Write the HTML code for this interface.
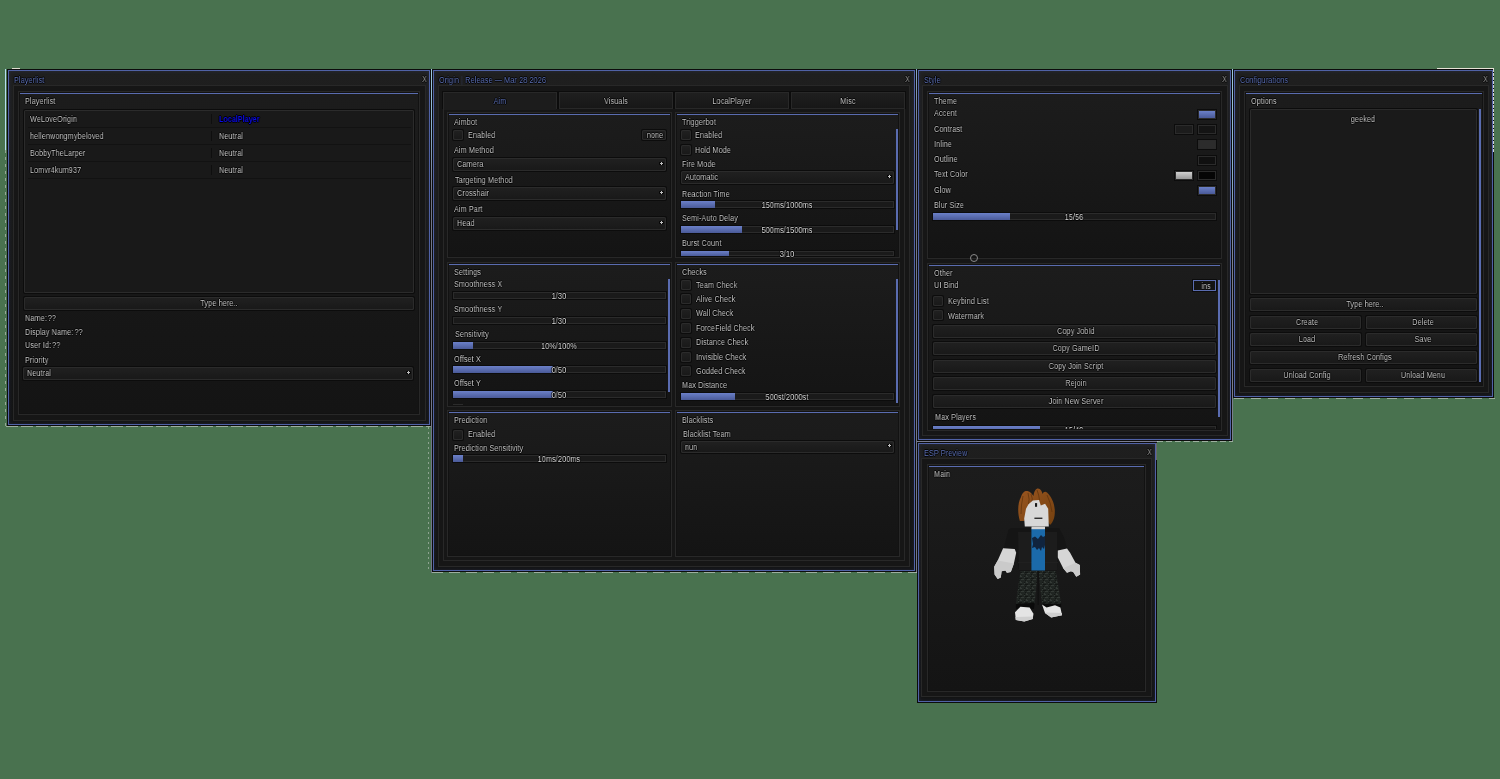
<!DOCTYPE html>
<html><head><meta charset="utf-8"><style>
html,body{margin:0;padding:0}
body{width:1500px;height:779px;background:#49724f;position:relative;overflow:hidden;font-family:"Liberation Sans",sans-serif}
.b{position:absolute}
.t{position:absolute;font-size:8.4px;line-height:10px;white-space:nowrap;letter-spacing:0.15px;transform:scaleX(0.86);transform-origin:0 0;will-change:transform;text-shadow:1px 0 0 #000,-1px 0 0 #000,0 1px 0 #000,0 -1px 0 #000}
</style></head><body>
<div class="b" style="left:7px;top:69px;width:424px;height:357px;background:#0c0c0c;"></div><div class="b" style="left:8px;top:70px;width:422px;height:355px;background:#5062a6;"></div><div class="b" style="left:9px;top:71px;width:420px;height:353px;background:#171717;background:linear-gradient(#1f1f1f,#1a1a1a 40%,#141414);box-shadow:inset 0 0 4px 0 rgba(70,85,150,0.22)"></div><div class="t" style="left:14px;top:74.5px;color:#5e72b8;">Playerlist</div><div class="t" style="left:422px;top:74.0px;color:#9a9a9a;">X</div><div class="b" style="left:13px;top:85px;width:413px;height:336px;background:#282828;"></div><div class="b" style="left:14px;top:86px;width:411px;height:334px;background:#161616;"></div><div class="b" style="left:18px;top:91px;width:402px;height:324px;background:#282828;"></div><div class="b" style="left:19px;top:92px;width:400px;height:322px;background:#121212;"></div><div class="b" style="left:20px;top:93px;width:398px;height:320px;background:#1b1b1b;background:linear-gradient(#1c1c1c,#1b1b1b 15%,#141414)"></div><div class="b" style="left:20px;top:93px;width:398px;height:1px;background:#5a6cb0;"></div><div class="t" style="left:25px;top:95.5px;color:#c8c8c8;">Playerlist</div><div class="b" style="left:23px;top:109px;width:392px;height:185px;background:#0c0c0c;border-radius:2px"></div><div class="b" style="left:24px;top:110px;width:390px;height:183px;background:#2b2b2b;border-radius:1.5px"></div><div class="b" style="left:25px;top:111px;width:388px;height:181px;background:#191919;"></div><div class="t" style="left:30px;top:113.8px;color:#c8c8c8;">WeLoveOrigin</div><div class="b" style="left:211px;top:114px;width:1px;height:10px;background:#0e0e0e;"></div><div class="t" style="left:219px;top:113.8px;color:#0c0ce6;font-weight:bold;letter-spacing:0px">LocalPlayer</div><div class="b" style="left:28px;top:127px;width:383px;height:1px;background:#121212;"></div><div class="t" style="left:30px;top:130.8px;color:#c8c8c8;">hellenwongmybeloved</div><div class="b" style="left:211px;top:131px;width:1px;height:10px;background:#0e0e0e;"></div><div class="t" style="left:219px;top:130.8px;color:#c8c8c8;">Neutral</div><div class="b" style="left:28px;top:144px;width:383px;height:1px;background:#121212;"></div><div class="t" style="left:30px;top:147.8px;color:#c8c8c8;">BobbyTheLarper</div><div class="b" style="left:211px;top:148px;width:1px;height:10px;background:#0e0e0e;"></div><div class="t" style="left:219px;top:147.8px;color:#c8c8c8;">Neutral</div><div class="b" style="left:28px;top:161px;width:383px;height:1px;background:#121212;"></div><div class="t" style="left:30px;top:164.8px;color:#c8c8c8;">Lomvr4kum937</div><div class="b" style="left:211px;top:165px;width:1px;height:10px;background:#0e0e0e;"></div><div class="t" style="left:219px;top:164.8px;color:#c8c8c8;">Neutral</div><div class="b" style="left:28px;top:178px;width:383px;height:1px;background:#121212;"></div><div class="b" style="left:23px;top:296px;width:392px;height:15px;background:#0c0c0c;border-radius:2px"></div><div class="b" style="left:24px;top:297px;width:390px;height:13px;background:#2b2b2b;border-radius:1.5px"></div><div class="b" style="left:25px;top:298px;width:388px;height:11px;background:linear-gradient(#202020,#191919);border-radius:1px"></div><div class="t" style="left:69px;width:300px;text-align:center;top:298.0px;color:#c8c8c8;transform-origin:50% 0;">Type here..</div><div class="t" style="left:25px;top:313.0px;color:#c8c8c8;">Name:<span style="margin-left:1px">??</span></div><div class="t" style="left:25px;top:326.5px;color:#c8c8c8;">Display Name:<span style="margin-left:1px">??</span></div><div class="t" style="left:25px;top:340.0px;color:#c8c8c8;">User Id:<span style="margin-left:1px">??</span></div><div class="t" style="left:25px;top:354.5px;color:#c8c8c8;">Priority</div><div class="b" style="left:22px;top:366px;width:392px;height:15px;background:#0c0c0c;border-radius:2px"></div><div class="b" style="left:23px;top:367px;width:390px;height:13px;background:#2b2b2b;border-radius:1.5px"></div><div class="b" style="left:24px;top:368px;width:388px;height:11px;background:linear-gradient(#202020,#191919);border-radius:1px"></div><div class="t" style="left:27px;top:368.0px;color:#c8c8c8;">Neutral</div><div class="b" style="left:406px;top:371px;width:5px;height:3px;background:#050505;border-radius:1px"></div><div class="b" style="left:407px;top:372px;width:3px;height:1px;background:#c0c0c0;"></div><div class="b" style="left:408px;top:371px;width:1px;height:3px;background:#c0c0c0;"></div><div class="b" style="left:432px;top:69px;width:484px;height:503px;background:#0c0c0c;"></div><div class="b" style="left:433px;top:70px;width:482px;height:501px;background:#5062a6;"></div><div class="b" style="left:434px;top:71px;width:480px;height:499px;background:#171717;background:linear-gradient(#1f1f1f,#1a1a1a 40%,#141414);box-shadow:inset 0 0 4px 0 rgba(70,85,150,0.22)"></div><div class="t" style="left:439px;top:74.5px;color:#5e72b8;">Origin <span style="color:#2e3550;text-shadow:none">|</span> Release — Mar 28 2026</div><div class="t" style="left:905px;top:74.0px;color:#9a9a9a;">X</div><div class="b" style="left:438px;top:85px;width:472px;height:482px;background:#282828;"></div><div class="b" style="left:439px;top:86px;width:470px;height:480px;background:#161616;"></div><div class="b" style="left:443px;top:108px;width:462px;height:453px;background:#282828;"></div><div class="b" style="left:444px;top:109px;width:460px;height:451px;background:#161616;"></div><div class="b" style="left:442px;top:91px;width:116px;height:18px;background:#0c0c0c;"></div><div class="b" style="left:443px;top:92px;width:114px;height:17px;background:#282828;"></div><div class="b" style="left:444px;top:93px;width:112px;height:17px;background:#1c1c1c;"></div><div class="t" style="left:349.5px;width:300px;text-align:center;top:95.5px;color:#5e72b8;transform-origin:50% 0;">Aim</div><div class="b" style="left:558px;top:91px;width:116px;height:18px;background:#0c0c0c;"></div><div class="b" style="left:559px;top:92px;width:114px;height:17px;background:#282828;"></div><div class="b" style="left:560px;top:93px;width:112px;height:15px;background:linear-gradient(#1f1f1f,#171717)"></div><div class="t" style="left:465.5px;width:300px;text-align:center;top:95.5px;color:#c8c8c8;transform-origin:50% 0;">Visuals</div><div class="b" style="left:674px;top:91px;width:116px;height:18px;background:#0c0c0c;"></div><div class="b" style="left:675px;top:92px;width:114px;height:17px;background:#282828;"></div><div class="b" style="left:676px;top:93px;width:112px;height:15px;background:linear-gradient(#1f1f1f,#171717)"></div><div class="t" style="left:581.5px;width:300px;text-align:center;top:95.5px;color:#c8c8c8;transform-origin:50% 0;">LocalPlayer</div><div class="b" style="left:790px;top:91px;width:116px;height:18px;background:#0c0c0c;"></div><div class="b" style="left:791px;top:92px;width:114px;height:17px;background:#282828;"></div><div class="b" style="left:792px;top:93px;width:112px;height:15px;background:linear-gradient(#1f1f1f,#171717)"></div><div class="t" style="left:697.5px;width:300px;text-align:center;top:95.5px;color:#c8c8c8;transform-origin:50% 0;">Misc</div><div class="b" style="left:447px;top:112px;width:225px;height:146px;background:#282828;"></div><div class="b" style="left:448px;top:113px;width:223px;height:144px;background:#121212;"></div><div class="b" style="left:449px;top:114px;width:221px;height:142px;background:#1b1b1b;background:linear-gradient(#1c1c1c,#1b1b1b 15%,#141414)"></div><div class="b" style="left:449px;top:114px;width:221px;height:1px;background:#5a6cb0;"></div><div class="t" style="left:454px;top:116.5px;color:#c8c8c8;">Aimbot</div><div class="b" style="left:452px;top:129px;width:12px;height:12px;background:#0c0c0c;border-radius:2px"></div><div class="b" style="left:453px;top:130px;width:10px;height:10px;background:#2b2b2b;border-radius:1.5px"></div><div class="b" style="left:454px;top:131px;width:8px;height:8px;background:linear-gradient(#202020,#191919);border-radius:1px"></div><div class="t" style="left:468px;top:130.0px;color:#c8c8c8;">Enabled</div><div class="b" style="left:641px;top:129px;width:26px;height:12px;background:#0c0c0c;border-radius:2px"></div><div class="b" style="left:642px;top:130px;width:24px;height:10px;background:#2b2b2b;border-radius:1.5px"></div><div class="b" style="left:643px;top:131px;width:22px;height:8px;background:linear-gradient(#202020,#191919);border-radius:1px"></div><div class="t" style="left:504.5px;width:300px;text-align:center;top:130.0px;color:#c8c8c8;transform-origin:50% 0;">none</div><div class="t" style="left:454px;top:145.0px;color:#c8c8c8;">Aim Method</div><div class="b" style="left:452px;top:157px;width:215px;height:15px;background:#0c0c0c;border-radius:2px"></div><div class="b" style="left:453px;top:158px;width:213px;height:13px;background:#2b2b2b;border-radius:1.5px"></div><div class="b" style="left:454px;top:159px;width:211px;height:11px;background:linear-gradient(#202020,#191919);border-radius:1px"></div><div class="t" style="left:457px;top:159.0px;color:#c8c8c8;">Camera</div><div class="b" style="left:659px;top:162px;width:5px;height:3px;background:#050505;border-radius:1px"></div><div class="b" style="left:660px;top:163px;width:3px;height:1px;background:#c0c0c0;"></div><div class="b" style="left:661px;top:162px;width:1px;height:3px;background:#c0c0c0;"></div><div class="t" style="left:455px;top:174.5px;color:#c8c8c8;">Targeting Method</div><div class="b" style="left:452px;top:186px;width:215px;height:15px;background:#0c0c0c;border-radius:2px"></div><div class="b" style="left:453px;top:187px;width:213px;height:13px;background:#2b2b2b;border-radius:1.5px"></div><div class="b" style="left:454px;top:188px;width:211px;height:11px;background:linear-gradient(#202020,#191919);border-radius:1px"></div><div class="t" style="left:457px;top:188.0px;color:#c8c8c8;">Crosshair</div><div class="b" style="left:659px;top:191px;width:5px;height:3px;background:#050505;border-radius:1px"></div><div class="b" style="left:660px;top:192px;width:3px;height:1px;background:#c0c0c0;"></div><div class="b" style="left:661px;top:191px;width:1px;height:3px;background:#c0c0c0;"></div><div class="t" style="left:454px;top:204.0px;color:#c8c8c8;">Aim Part</div><div class="b" style="left:452px;top:216px;width:215px;height:15px;background:#0c0c0c;border-radius:2px"></div><div class="b" style="left:453px;top:217px;width:213px;height:13px;background:#2b2b2b;border-radius:1.5px"></div><div class="b" style="left:454px;top:218px;width:211px;height:11px;background:linear-gradient(#202020,#191919);border-radius:1px"></div><div class="t" style="left:457px;top:218.0px;color:#c8c8c8;">Head</div><div class="b" style="left:659px;top:221px;width:5px;height:3px;background:#050505;border-radius:1px"></div><div class="b" style="left:660px;top:222px;width:3px;height:1px;background:#c0c0c0;"></div><div class="b" style="left:661px;top:221px;width:1px;height:3px;background:#c0c0c0;"></div><div class="b" style="left:675px;top:112px;width:225px;height:146px;background:#282828;"></div><div class="b" style="left:676px;top:113px;width:223px;height:144px;background:#121212;"></div><div class="b" style="left:677px;top:114px;width:221px;height:142px;background:#1b1b1b;background:linear-gradient(#1c1c1c,#1b1b1b 15%,#141414)"></div><div class="b" style="left:677px;top:114px;width:221px;height:1px;background:#5a6cb0;"></div><div class="t" style="left:682px;top:116.5px;color:#c8c8c8;">Triggerbot</div><div class="b" style="left:680px;top:129px;width:12px;height:12px;background:#0c0c0c;border-radius:2px"></div><div class="b" style="left:681px;top:130px;width:10px;height:10px;background:#2b2b2b;border-radius:1.5px"></div><div class="b" style="left:682px;top:131px;width:8px;height:8px;background:linear-gradient(#202020,#191919);border-radius:1px"></div><div class="t" style="left:695px;top:130.0px;color:#c8c8c8;">Enabled</div><div class="b" style="left:680px;top:144px;width:12px;height:12px;background:#0c0c0c;border-radius:2px"></div><div class="b" style="left:681px;top:145px;width:10px;height:10px;background:#2b2b2b;border-radius:1.5px"></div><div class="b" style="left:682px;top:146px;width:8px;height:8px;background:linear-gradient(#202020,#191919);border-radius:1px"></div><div class="t" style="left:695px;top:145.0px;color:#c8c8c8;">Hold Mode</div><div class="t" style="left:682px;top:159.0px;color:#c8c8c8;">Fire Mode</div><div class="b" style="left:680px;top:170px;width:215px;height:15px;background:#0c0c0c;border-radius:2px"></div><div class="b" style="left:681px;top:171px;width:213px;height:13px;background:#2b2b2b;border-radius:1.5px"></div><div class="b" style="left:682px;top:172px;width:211px;height:11px;background:linear-gradient(#202020,#191919);border-radius:1px"></div><div class="t" style="left:685px;top:172.0px;color:#c8c8c8;">Automatic</div><div class="b" style="left:887px;top:175px;width:5px;height:3px;background:#050505;border-radius:1px"></div><div class="b" style="left:888px;top:176px;width:3px;height:1px;background:#c0c0c0;"></div><div class="b" style="left:889px;top:175px;width:1px;height:3px;background:#c0c0c0;"></div><div class="t" style="left:682px;top:188.5px;color:#c8c8c8;">Reaction Time</div><div class="b" style="left:680px;top:200px;width:215px;height:9px;background:#0c0c0c;"></div><div class="b" style="left:681px;top:201px;width:213px;height:7px;background:#2b2b2b;"></div><div class="b" style="left:682px;top:202px;width:211px;height:5px;background:#1a1a1a;"></div><div class="b" style="left:681px;top:201px;width:34px;height:7px;background:linear-gradient(#6b80c8,#4a5a98)"></div><div class="t" style="left:637.0px;width:300px;text-align:center;top:199.5px;color:#c8c8c8;transform-origin:50% 0;color:#dcdcdc">150ms/1000ms</div><div class="t" style="left:682px;top:213.0px;color:#c8c8c8;">Semi-Auto Delay</div><div class="b" style="left:680px;top:225px;width:215px;height:9px;background:#0c0c0c;"></div><div class="b" style="left:681px;top:226px;width:213px;height:7px;background:#2b2b2b;"></div><div class="b" style="left:682px;top:227px;width:211px;height:5px;background:#1a1a1a;"></div><div class="b" style="left:681px;top:226px;width:61px;height:7px;background:linear-gradient(#6b80c8,#4a5a98)"></div><div class="t" style="left:637.0px;width:300px;text-align:center;top:224.5px;color:#c8c8c8;transform-origin:50% 0;color:#dcdcdc">500ms/1500ms</div><div class="t" style="left:682px;top:238.0px;color:#c8c8c8;">Burst Count</div><div class="b" style="left:680px;top:250px;width:215px;height:7px;background:#0c0c0c;"></div><div class="b" style="left:681px;top:251px;width:213px;height:5px;background:#2b2b2b;"></div><div class="b" style="left:682px;top:252px;width:211px;height:3px;background:#1a1a1a;"></div><div class="b" style="left:681px;top:251px;width:48px;height:5px;background:linear-gradient(#6b80c8,#4a5a98)"></div><div class="t" style="left:637.0px;width:300px;text-align:center;top:248.5px;color:#c8c8c8;transform-origin:50% 0;color:#dcdcdc">3/10</div><div class="b" style="left:896px;top:129px;width:2px;height:101px;background:#5a6cb0;"></div><div class="b" style="left:447px;top:262px;width:225px;height:145px;background:#282828;"></div><div class="b" style="left:448px;top:263px;width:223px;height:143px;background:#121212;"></div><div class="b" style="left:449px;top:264px;width:221px;height:141px;background:#1b1b1b;background:linear-gradient(#1c1c1c,#1b1b1b 15%,#141414)"></div><div class="b" style="left:449px;top:264px;width:221px;height:1px;background:#5a6cb0;"></div><div class="t" style="left:454px;top:266.5px;color:#c8c8c8;">Settings</div><div class="t" style="left:454px;top:279.0px;color:#c8c8c8;">Smoothness X</div><div class="b" style="left:452px;top:291px;width:215px;height:9px;background:#0c0c0c;"></div><div class="b" style="left:453px;top:292px;width:213px;height:7px;background:#2b2b2b;"></div><div class="b" style="left:454px;top:293px;width:211px;height:5px;background:#1a1a1a;"></div><div class="t" style="left:409.0px;width:300px;text-align:center;top:290.5px;color:#c8c8c8;transform-origin:50% 0;color:#dcdcdc">1/30</div><div class="t" style="left:454px;top:303.5px;color:#c8c8c8;">Smoothness Y</div><div class="b" style="left:452px;top:316px;width:215px;height:9px;background:#0c0c0c;"></div><div class="b" style="left:453px;top:317px;width:213px;height:7px;background:#2b2b2b;"></div><div class="b" style="left:454px;top:318px;width:211px;height:5px;background:#1a1a1a;"></div><div class="t" style="left:409.0px;width:300px;text-align:center;top:315.5px;color:#c8c8c8;transform-origin:50% 0;color:#dcdcdc">1/30</div><div class="t" style="left:455px;top:328.5px;color:#c8c8c8;">Sensitivity</div><div class="b" style="left:452px;top:341px;width:215px;height:9px;background:#0c0c0c;"></div><div class="b" style="left:453px;top:342px;width:213px;height:7px;background:#2b2b2b;"></div><div class="b" style="left:454px;top:343px;width:211px;height:5px;background:#1a1a1a;"></div><div class="b" style="left:453px;top:342px;width:20px;height:7px;background:linear-gradient(#6b80c8,#4a5a98)"></div><div class="t" style="left:409.0px;width:300px;text-align:center;top:340.5px;color:#c8c8c8;transform-origin:50% 0;color:#dcdcdc">10%/100%</div><div class="t" style="left:454px;top:353.5px;color:#c8c8c8;">Offset X</div><div class="b" style="left:452px;top:365px;width:215px;height:9px;background:#0c0c0c;"></div><div class="b" style="left:453px;top:366px;width:213px;height:7px;background:#2b2b2b;"></div><div class="b" style="left:454px;top:367px;width:211px;height:5px;background:#1a1a1a;"></div><div class="b" style="left:453px;top:366px;width:100px;height:7px;background:linear-gradient(#6b80c8,#4a5a98)"></div><div class="t" style="left:409.0px;width:300px;text-align:center;top:364.5px;color:#c8c8c8;transform-origin:50% 0;color:#dcdcdc">0/50</div><div class="t" style="left:454px;top:378.0px;color:#c8c8c8;">Offset Y</div><div class="b" style="left:452px;top:390px;width:215px;height:9px;background:#0c0c0c;"></div><div class="b" style="left:453px;top:391px;width:213px;height:7px;background:#2b2b2b;"></div><div class="b" style="left:454px;top:392px;width:211px;height:5px;background:#1a1a1a;"></div><div class="b" style="left:453px;top:391px;width:100px;height:7px;background:linear-gradient(#6b80c8,#4a5a98)"></div><div class="t" style="left:409.0px;width:300px;text-align:center;top:389.5px;color:#c8c8c8;transform-origin:50% 0;color:#dcdcdc">0/50</div><div class="b" style="left:453px;top:404px;width:10px;height:1px;background:#2b2b2b;"></div><div class="b" style="left:668px;top:279px;width:2px;height:113px;background:#5a6cb0;"></div><div class="b" style="left:675px;top:262px;width:225px;height:145px;background:#282828;"></div><div class="b" style="left:676px;top:263px;width:223px;height:143px;background:#121212;"></div><div class="b" style="left:677px;top:264px;width:221px;height:141px;background:#1b1b1b;background:linear-gradient(#1c1c1c,#1b1b1b 15%,#141414)"></div><div class="b" style="left:677px;top:264px;width:221px;height:1px;background:#5a6cb0;"></div><div class="t" style="left:682px;top:266.5px;color:#c8c8c8;">Checks</div><div class="b" style="left:680px;top:279px;width:12px;height:12px;background:#0c0c0c;border-radius:2px"></div><div class="b" style="left:681px;top:280px;width:10px;height:10px;background:#2b2b2b;border-radius:1.5px"></div><div class="b" style="left:682px;top:281px;width:8px;height:8px;background:linear-gradient(#202020,#191919);border-radius:1px"></div><div class="t" style="left:696px;top:279.5px;color:#c8c8c8;">Team Check</div><div class="b" style="left:680px;top:293px;width:12px;height:12px;background:#0c0c0c;border-radius:2px"></div><div class="b" style="left:681px;top:294px;width:10px;height:10px;background:#2b2b2b;border-radius:1.5px"></div><div class="b" style="left:682px;top:295px;width:8px;height:8px;background:linear-gradient(#202020,#191919);border-radius:1px"></div><div class="t" style="left:696px;top:293.9px;color:#c8c8c8;">Alive Check</div><div class="b" style="left:680px;top:308px;width:12px;height:12px;background:#0c0c0c;border-radius:2px"></div><div class="b" style="left:681px;top:309px;width:10px;height:10px;background:#2b2b2b;border-radius:1.5px"></div><div class="b" style="left:682px;top:310px;width:8px;height:8px;background:linear-gradient(#202020,#191919);border-radius:1px"></div><div class="t" style="left:696px;top:308.3px;color:#c8c8c8;">Wall Check</div><div class="b" style="left:680px;top:322px;width:12px;height:12px;background:#0c0c0c;border-radius:2px"></div><div class="b" style="left:681px;top:323px;width:10px;height:10px;background:#2b2b2b;border-radius:1.5px"></div><div class="b" style="left:682px;top:324px;width:8px;height:8px;background:linear-gradient(#202020,#191919);border-radius:1px"></div><div class="t" style="left:696px;top:322.7px;color:#c8c8c8;">ForceField Check</div><div class="b" style="left:680px;top:337px;width:12px;height:12px;background:#0c0c0c;border-radius:2px"></div><div class="b" style="left:681px;top:338px;width:10px;height:10px;background:#2b2b2b;border-radius:1.5px"></div><div class="b" style="left:682px;top:339px;width:8px;height:8px;background:linear-gradient(#202020,#191919);border-radius:1px"></div><div class="t" style="left:696px;top:337.1px;color:#c8c8c8;">Distance Check</div><div class="b" style="left:680px;top:351px;width:12px;height:12px;background:#0c0c0c;border-radius:2px"></div><div class="b" style="left:681px;top:352px;width:10px;height:10px;background:#2b2b2b;border-radius:1.5px"></div><div class="b" style="left:682px;top:353px;width:8px;height:8px;background:linear-gradient(#202020,#191919);border-radius:1px"></div><div class="t" style="left:696px;top:351.5px;color:#c8c8c8;">Invisible Check</div><div class="b" style="left:680px;top:365px;width:12px;height:12px;background:#0c0c0c;border-radius:2px"></div><div class="b" style="left:681px;top:366px;width:10px;height:10px;background:#2b2b2b;border-radius:1.5px"></div><div class="b" style="left:682px;top:367px;width:8px;height:8px;background:linear-gradient(#202020,#191919);border-radius:1px"></div><div class="t" style="left:696px;top:365.9px;color:#c8c8c8;">Godded Check</div><div class="t" style="left:682px;top:379.5px;color:#c8c8c8;">Max Distance</div><div class="b" style="left:680px;top:392px;width:215px;height:9px;background:#0c0c0c;"></div><div class="b" style="left:681px;top:393px;width:213px;height:7px;background:#2b2b2b;"></div><div class="b" style="left:682px;top:394px;width:211px;height:5px;background:#1a1a1a;"></div><div class="b" style="left:681px;top:393px;width:54px;height:7px;background:linear-gradient(#6b80c8,#4a5a98)"></div><div class="t" style="left:637.0px;width:300px;text-align:center;top:391.5px;color:#c8c8c8;transform-origin:50% 0;color:#dcdcdc">500st/2000st</div><div class="b" style="left:896px;top:279px;width:2px;height:124px;background:#5a6cb0;"></div><div class="b" style="left:447px;top:410px;width:225px;height:147px;background:#282828;"></div><div class="b" style="left:448px;top:411px;width:223px;height:145px;background:#121212;"></div><div class="b" style="left:449px;top:412px;width:221px;height:143px;background:#1b1b1b;background:linear-gradient(#1c1c1c,#1b1b1b 15%,#141414)"></div><div class="b" style="left:449px;top:412px;width:221px;height:1px;background:#5a6cb0;"></div><div class="t" style="left:454px;top:414.5px;color:#c8c8c8;">Prediction</div><div class="b" style="left:452px;top:429px;width:12px;height:12px;background:#0c0c0c;border-radius:2px"></div><div class="b" style="left:453px;top:430px;width:10px;height:10px;background:#2b2b2b;border-radius:1.5px"></div><div class="b" style="left:454px;top:431px;width:8px;height:8px;background:linear-gradient(#202020,#191919);border-radius:1px"></div><div class="t" style="left:468px;top:429.0px;color:#c8c8c8;">Enabled</div><div class="t" style="left:454px;top:442.5px;color:#c8c8c8;">Prediction Sensitivity</div><div class="b" style="left:452px;top:454px;width:215px;height:9px;background:#0c0c0c;"></div><div class="b" style="left:453px;top:455px;width:213px;height:7px;background:#2b2b2b;"></div><div class="b" style="left:454px;top:456px;width:211px;height:5px;background:#1a1a1a;"></div><div class="b" style="left:453px;top:455px;width:10px;height:7px;background:linear-gradient(#6b80c8,#4a5a98)"></div><div class="t" style="left:409.0px;width:300px;text-align:center;top:453.5px;color:#c8c8c8;transform-origin:50% 0;color:#dcdcdc">10ms/200ms</div><div class="b" style="left:675px;top:410px;width:225px;height:147px;background:#282828;"></div><div class="b" style="left:676px;top:411px;width:223px;height:145px;background:#121212;"></div><div class="b" style="left:677px;top:412px;width:221px;height:143px;background:#1b1b1b;background:linear-gradient(#1c1c1c,#1b1b1b 15%,#141414)"></div><div class="b" style="left:677px;top:412px;width:221px;height:1px;background:#5a6cb0;"></div><div class="t" style="left:682px;top:414.5px;color:#c8c8c8;">Blacklists</div><div class="t" style="left:683px;top:428.5px;color:#c8c8c8;">Blacklist Team</div><div class="b" style="left:680px;top:440px;width:215px;height:14px;background:#0c0c0c;border-radius:2px"></div><div class="b" style="left:681px;top:441px;width:213px;height:12px;background:#2b2b2b;border-radius:1.5px"></div><div class="b" style="left:682px;top:442px;width:211px;height:10px;background:linear-gradient(#202020,#191919);border-radius:1px"></div><div class="t" style="left:685px;top:441.5px;color:#c8c8c8;">nun</div><div class="b" style="left:887px;top:444px;width:5px;height:3px;background:#050505;border-radius:1px"></div><div class="b" style="left:888px;top:445px;width:3px;height:1px;background:#c0c0c0;"></div><div class="b" style="left:889px;top:444px;width:1px;height:3px;background:#c0c0c0;"></div><div class="b" style="left:917px;top:69px;width:315px;height:372px;background:#0c0c0c;"></div><div class="b" style="left:918px;top:70px;width:313px;height:370px;background:#5062a6;"></div><div class="b" style="left:919px;top:71px;width:311px;height:368px;background:#171717;background:linear-gradient(#1f1f1f,#1a1a1a 40%,#141414);box-shadow:inset 0 0 4px 0 rgba(70,85,150,0.22)"></div><div class="t" style="left:924px;top:74.5px;color:#5e72b8;">Style</div><div class="t" style="left:1222px;top:74.0px;color:#9a9a9a;">X</div><div class="b" style="left:922px;top:85px;width:306px;height:351px;background:#282828;"></div><div class="b" style="left:923px;top:86px;width:304px;height:349px;background:#161616;"></div><div class="b" style="left:927px;top:91px;width:295px;height:168px;background:#282828;"></div><div class="b" style="left:928px;top:92px;width:293px;height:166px;background:#121212;"></div><div class="b" style="left:929px;top:93px;width:291px;height:164px;background:#1b1b1b;background:linear-gradient(#1c1c1c,#1b1b1b 15%,#141414)"></div><div class="b" style="left:929px;top:93px;width:291px;height:1px;background:#5a6cb0;"></div><div class="t" style="left:934px;top:95.5px;color:#c8c8c8;">Theme</div><div class="t" style="left:934px;top:108.0px;color:#c8c8c8;">Accent</div><div class="t" style="left:934px;top:123.5px;color:#c8c8c8;">Contrast</div><div class="t" style="left:934px;top:138.5px;color:#c8c8c8;">Inline</div><div class="t" style="left:934px;top:154.0px;color:#c8c8c8;">Outline</div><div class="t" style="left:934px;top:169.0px;color:#c8c8c8;">Text Color</div><div class="t" style="left:934px;top:184.5px;color:#c8c8c8;">Glow</div><div class="b" style="left:1197px;top:109px;width:20px;height:11px;background:#0c0c0c;"></div><div class="b" style="left:1198px;top:110px;width:18px;height:9px;background:#2b2b2b;"></div><div class="b" style="left:1199px;top:111px;width:16px;height:7px;background:linear-gradient(#6b80c8,#4a5a98)"></div><div class="b" style="left:1174px;top:124px;width:20px;height:11px;background:#0c0c0c;"></div><div class="b" style="left:1175px;top:125px;width:18px;height:9px;background:#2b2b2b;"></div><div class="b" style="left:1176px;top:126px;width:16px;height:7px;background:#1c1c1c"></div><div class="b" style="left:1197px;top:124px;width:20px;height:11px;background:#0c0c0c;"></div><div class="b" style="left:1198px;top:125px;width:18px;height:9px;background:#2b2b2b;"></div><div class="b" style="left:1199px;top:126px;width:16px;height:7px;background:#141414"></div><div class="b" style="left:1197px;top:139px;width:20px;height:11px;background:#0c0c0c;"></div><div class="b" style="left:1198px;top:140px;width:18px;height:9px;background:#2b2b2b;"></div><div class="b" style="left:1199px;top:141px;width:16px;height:7px;background:#2c2c2c"></div><div class="b" style="left:1197px;top:155px;width:20px;height:11px;background:#0c0c0c;"></div><div class="b" style="left:1198px;top:156px;width:18px;height:9px;background:#2b2b2b;"></div><div class="b" style="left:1199px;top:157px;width:16px;height:7px;background:#101010"></div><div class="b" style="left:1174px;top:170px;width:20px;height:11px;background:#0c0c0c;"></div><div class="b" style="left:1175px;top:171px;width:18px;height:9px;background:#2b2b2b;"></div><div class="b" style="left:1176px;top:172px;width:16px;height:7px;background:linear-gradient(#d0d0d0,#989898)"></div><div class="b" style="left:1197px;top:170px;width:20px;height:11px;background:#0c0c0c;"></div><div class="b" style="left:1198px;top:171px;width:18px;height:9px;background:#2b2b2b;"></div><div class="b" style="left:1199px;top:172px;width:16px;height:7px;background:#050505"></div><div class="b" style="left:1197px;top:185px;width:20px;height:11px;background:#0c0c0c;"></div><div class="b" style="left:1198px;top:186px;width:18px;height:9px;background:#2b2b2b;"></div><div class="b" style="left:1199px;top:187px;width:16px;height:7px;background:linear-gradient(#6b80c8,#4a5a98)"></div><div class="t" style="left:934px;top:200.0px;color:#c8c8c8;">Blur Size</div><div class="b" style="left:932px;top:212px;width:285px;height:9px;background:#0c0c0c;"></div><div class="b" style="left:933px;top:213px;width:283px;height:7px;background:#2b2b2b;"></div><div class="b" style="left:934px;top:214px;width:281px;height:5px;background:#1a1a1a;"></div><div class="b" style="left:933px;top:213px;width:77px;height:7px;background:linear-gradient(#6b80c8,#4a5a98)"></div><div class="t" style="left:924.0px;width:300px;text-align:center;top:211.5px;color:#c8c8c8;transform-origin:50% 0;color:#dcdcdc">15/56</div><div class="b" style="left:970px;top:254px;width:6px;height:6px;border:1.5px solid #8a8a8a;border-radius:50%"></div><div class="b" style="left:927px;top:263px;width:295px;height:168px;background:#282828;"></div><div class="b" style="left:928px;top:264px;width:293px;height:166px;background:#121212;"></div><div class="b" style="left:929px;top:265px;width:291px;height:164px;background:#1b1b1b;background:linear-gradient(#1c1c1c,#1b1b1b 15%,#141414)"></div><div class="b" style="left:929px;top:265px;width:291px;height:1px;background:#5a6cb0;"></div><div class="t" style="left:934px;top:267.5px;color:#c8c8c8;">Other</div><div class="t" style="left:934px;top:279.5px;color:#c8c8c8;">UI Bind</div><div class="b" style="left:1192px;top:279px;width:25px;height:13px;background:#0c0c0c;"></div><div class="b" style="left:1193px;top:280px;width:23px;height:11px;background:#5a6cb0;"></div><div class="b" style="left:1194px;top:281px;width:21px;height:9px;background:#141414;"></div><div class="t" style="left:1056px;width:300px;text-align:center;top:280.5px;color:#c8c8c8;transform-origin:50% 0;">ins</div><div class="b" style="left:932px;top:295px;width:12px;height:12px;background:#0c0c0c;border-radius:2px"></div><div class="b" style="left:933px;top:296px;width:10px;height:10px;background:#2b2b2b;border-radius:1.5px"></div><div class="b" style="left:934px;top:297px;width:8px;height:8px;background:linear-gradient(#202020,#191919);border-radius:1px"></div><div class="t" style="left:948px;top:296.0px;color:#c8c8c8;">Keybind List</div><div class="b" style="left:932px;top:309px;width:12px;height:12px;background:#0c0c0c;border-radius:2px"></div><div class="b" style="left:933px;top:310px;width:10px;height:10px;background:#2b2b2b;border-radius:1.5px"></div><div class="b" style="left:934px;top:311px;width:8px;height:8px;background:linear-gradient(#202020,#191919);border-radius:1px"></div><div class="t" style="left:948px;top:310.5px;color:#c8c8c8;">Watermark</div><div class="b" style="left:932px;top:324px;width:285px;height:15px;background:#0c0c0c;border-radius:2px"></div><div class="b" style="left:933px;top:325px;width:283px;height:13px;background:#2b2b2b;border-radius:1.5px"></div><div class="b" style="left:934px;top:326px;width:281px;height:11px;background:linear-gradient(#202020,#191919);border-radius:1px"></div><div class="t" style="left:925.5px;width:300px;text-align:center;top:326.0px;color:#c8c8c8;transform-origin:50% 0;">Copy JobId</div><div class="b" style="left:932px;top:341px;width:285px;height:15px;background:#0c0c0c;border-radius:2px"></div><div class="b" style="left:933px;top:342px;width:283px;height:13px;background:#2b2b2b;border-radius:1.5px"></div><div class="b" style="left:934px;top:343px;width:281px;height:11px;background:linear-gradient(#202020,#191919);border-radius:1px"></div><div class="t" style="left:925.5px;width:300px;text-align:center;top:343.0px;color:#c8c8c8;transform-origin:50% 0;">Copy GameID</div><div class="b" style="left:932px;top:359px;width:285px;height:15px;background:#0c0c0c;border-radius:2px"></div><div class="b" style="left:933px;top:360px;width:283px;height:13px;background:#2b2b2b;border-radius:1.5px"></div><div class="b" style="left:934px;top:361px;width:281px;height:11px;background:linear-gradient(#202020,#191919);border-radius:1px"></div><div class="t" style="left:925.5px;width:300px;text-align:center;top:361.0px;color:#c8c8c8;transform-origin:50% 0;">Copy Join Script</div><div class="b" style="left:932px;top:376px;width:285px;height:15px;background:#0c0c0c;border-radius:2px"></div><div class="b" style="left:933px;top:377px;width:283px;height:13px;background:#2b2b2b;border-radius:1.5px"></div><div class="b" style="left:934px;top:378px;width:281px;height:11px;background:linear-gradient(#202020,#191919);border-radius:1px"></div><div class="t" style="left:925.5px;width:300px;text-align:center;top:378.0px;color:#c8c8c8;transform-origin:50% 0;">Rejoin</div><div class="b" style="left:932px;top:394px;width:285px;height:15px;background:#0c0c0c;border-radius:2px"></div><div class="b" style="left:933px;top:395px;width:283px;height:13px;background:#2b2b2b;border-radius:1.5px"></div><div class="b" style="left:934px;top:396px;width:281px;height:11px;background:linear-gradient(#202020,#191919);border-radius:1px"></div><div class="t" style="left:925.5px;width:300px;text-align:center;top:396.0px;color:#c8c8c8;transform-origin:50% 0;">Join New Server</div><div class="t" style="left:935px;top:412.0px;color:#c8c8c8;">Max Players</div><div class="b" style="left:932px;top:425px;width:285px;height:9px;background:#0c0c0c;"></div><div class="b" style="left:933px;top:426px;width:283px;height:7px;background:#2b2b2b;"></div><div class="b" style="left:934px;top:427px;width:281px;height:5px;background:#1a1a1a;"></div><div class="b" style="left:933px;top:426px;width:107px;height:7px;background:linear-gradient(#6b80c8,#4a5a98)"></div><div class="t" style="left:924px;width:300px;text-align:center;top:424.5px;color:#c8c8c8;transform-origin:50% 0;color:#dcdcdc">15/40</div><div class="b" style="left:929px;top:429px;width:291px;height:1px;background:#121212;"></div><div class="b" style="left:927px;top:430px;width:295px;height:1px;background:#282828;"></div><div class="b" style="left:923px;top:431px;width:304px;height:4px;background:#161616;"></div><div class="b" style="left:1218px;top:280px;width:2px;height:137px;background:#5a6cb0;"></div><div class="b" style="left:1233px;top:69px;width:261px;height:329px;background:#0c0c0c;"></div><div class="b" style="left:1234px;top:70px;width:259px;height:327px;background:#5062a6;"></div><div class="b" style="left:1235px;top:71px;width:257px;height:325px;background:#171717;background:linear-gradient(#1f1f1f,#1a1a1a 40%,#141414);box-shadow:inset 0 0 4px 0 rgba(70,85,150,0.22)"></div><div class="t" style="left:1240px;top:74.5px;color:#5e72b8;">Configurations</div><div class="t" style="left:1483px;top:74.0px;color:#9a9a9a;">X</div><div class="b" style="left:1239px;top:85px;width:250px;height:308px;background:#282828;"></div><div class="b" style="left:1240px;top:86px;width:248px;height:306px;background:#161616;"></div><div class="b" style="left:1244px;top:91px;width:240px;height:296px;background:#282828;"></div><div class="b" style="left:1245px;top:92px;width:238px;height:294px;background:#121212;"></div><div class="b" style="left:1246px;top:93px;width:236px;height:292px;background:#1b1b1b;background:linear-gradient(#1c1c1c,#1b1b1b 15%,#141414)"></div><div class="b" style="left:1246px;top:93px;width:236px;height:1px;background:#5a6cb0;"></div><div class="t" style="left:1251px;top:95.5px;color:#c8c8c8;">Options</div><div class="b" style="left:1249px;top:108px;width:229px;height:187px;background:#0c0c0c;border-radius:2px"></div><div class="b" style="left:1250px;top:109px;width:227px;height:185px;background:#2b2b2b;border-radius:1.5px"></div><div class="b" style="left:1251px;top:110px;width:225px;height:183px;background:#1a1a1a;"></div><div class="t" style="left:1213px;width:300px;text-align:center;top:114.0px;color:#c8c8c8;transform-origin:50% 0;">geeked</div><div class="b" style="left:1479px;top:109px;width:2px;height:273px;background:#5a6cb0;"></div><div class="b" style="left:1249px;top:297px;width:229px;height:15px;background:#0c0c0c;border-radius:2px"></div><div class="b" style="left:1250px;top:298px;width:227px;height:13px;background:#2b2b2b;border-radius:1.5px"></div><div class="b" style="left:1251px;top:299px;width:225px;height:11px;background:linear-gradient(#202020,#191919);border-radius:1px"></div><div class="t" style="left:1214.5px;width:300px;text-align:center;top:299.0px;color:#c8c8c8;transform-origin:50% 0;">Type here..</div><div class="b" style="left:1249px;top:315px;width:113px;height:15px;background:#0c0c0c;border-radius:2px"></div><div class="b" style="left:1250px;top:316px;width:111px;height:13px;background:#2b2b2b;border-radius:1.5px"></div><div class="b" style="left:1251px;top:317px;width:109px;height:11px;background:linear-gradient(#202020,#191919);border-radius:1px"></div><div class="t" style="left:1156.5px;width:300px;text-align:center;top:317.0px;color:#c8c8c8;transform-origin:50% 0;">Create</div><div class="b" style="left:1365px;top:315px;width:113px;height:15px;background:#0c0c0c;border-radius:2px"></div><div class="b" style="left:1366px;top:316px;width:111px;height:13px;background:#2b2b2b;border-radius:1.5px"></div><div class="b" style="left:1367px;top:317px;width:109px;height:11px;background:linear-gradient(#202020,#191919);border-radius:1px"></div><div class="t" style="left:1272.5px;width:300px;text-align:center;top:317.0px;color:#c8c8c8;transform-origin:50% 0;">Delete</div><div class="b" style="left:1249px;top:332px;width:113px;height:15px;background:#0c0c0c;border-radius:2px"></div><div class="b" style="left:1250px;top:333px;width:111px;height:13px;background:#2b2b2b;border-radius:1.5px"></div><div class="b" style="left:1251px;top:334px;width:109px;height:11px;background:linear-gradient(#202020,#191919);border-radius:1px"></div><div class="t" style="left:1156.5px;width:300px;text-align:center;top:334.0px;color:#c8c8c8;transform-origin:50% 0;">Load</div><div class="b" style="left:1365px;top:332px;width:113px;height:15px;background:#0c0c0c;border-radius:2px"></div><div class="b" style="left:1366px;top:333px;width:111px;height:13px;background:#2b2b2b;border-radius:1.5px"></div><div class="b" style="left:1367px;top:334px;width:109px;height:11px;background:linear-gradient(#202020,#191919);border-radius:1px"></div><div class="t" style="left:1272.5px;width:300px;text-align:center;top:334.0px;color:#c8c8c8;transform-origin:50% 0;">Save</div><div class="b" style="left:1249px;top:350px;width:229px;height:15px;background:#0c0c0c;border-radius:2px"></div><div class="b" style="left:1250px;top:351px;width:227px;height:13px;background:#2b2b2b;border-radius:1.5px"></div><div class="b" style="left:1251px;top:352px;width:225px;height:11px;background:linear-gradient(#202020,#191919);border-radius:1px"></div><div class="t" style="left:1214.5px;width:300px;text-align:center;top:352.0px;color:#c8c8c8;transform-origin:50% 0;">Refresh Configs</div><div class="b" style="left:1249px;top:368px;width:113px;height:15px;background:#0c0c0c;border-radius:2px"></div><div class="b" style="left:1250px;top:369px;width:111px;height:13px;background:#2b2b2b;border-radius:1.5px"></div><div class="b" style="left:1251px;top:370px;width:109px;height:11px;background:linear-gradient(#202020,#191919);border-radius:1px"></div><div class="t" style="left:1156.5px;width:300px;text-align:center;top:370.0px;color:#c8c8c8;transform-origin:50% 0;">Unload Config</div><div class="b" style="left:1365px;top:368px;width:113px;height:15px;background:#0c0c0c;border-radius:2px"></div><div class="b" style="left:1366px;top:369px;width:111px;height:13px;background:#2b2b2b;border-radius:1.5px"></div><div class="b" style="left:1367px;top:370px;width:109px;height:11px;background:linear-gradient(#202020,#191919);border-radius:1px"></div><div class="t" style="left:1272.5px;width:300px;text-align:center;top:370.0px;color:#c8c8c8;transform-origin:50% 0;">Unload Menu</div><div class="b" style="left:917px;top:442px;width:240px;height:261px;background:#0c0c0c;"></div><div class="b" style="left:918px;top:443px;width:238px;height:259px;background:#5062a6;"></div><div class="b" style="left:919px;top:444px;width:236px;height:257px;background:#171717;background:linear-gradient(#1f1f1f,#1a1a1a 40%,#141414);box-shadow:inset 0 0 4px 0 rgba(70,85,150,0.22)"></div><div class="t" style="left:924px;top:447.5px;color:#5e72b8;">ESP Preview</div><div class="t" style="left:1147px;top:447.0px;color:#9a9a9a;">X</div><div class="b" style="left:921px;top:458px;width:231px;height:239px;background:#282828;"></div><div class="b" style="left:922px;top:459px;width:229px;height:237px;background:#161616;"></div><div class="b" style="left:927px;top:464px;width:219px;height:228px;background:#282828;"></div><div class="b" style="left:928px;top:465px;width:217px;height:226px;background:#121212;"></div><div class="b" style="left:929px;top:466px;width:215px;height:224px;background:#1b1b1b;background:linear-gradient(#1c1c1c,#1b1b1b 15%,#141414)"></div><div class="b" style="left:929px;top:466px;width:215px;height:1px;background:#5a6cb0;"></div><div class="t" style="left:934px;top:468.5px;color:#c8c8c8;">Main</div><div class="b" style="left:430px;top:69px;width:3px;height:358px;background:#0c0c0c;"></div><div class="b" style="left:431px;top:69px;width:1px;height:504px;background:;background:linear-gradient(#9cc8e0,#8ab0cc 60px,#727688 120px,#727688)"></div><div class="b" style="left:916px;top:69px;width:1px;height:504px;background:;background:linear-gradient(#8aa8c8,#727688 60px,#727688)"></div><div class="b" style="left:917px;top:441px;width:241px;height:1px;background:#7c7f92;"></div><div class="b" style="left:1232px;top:69px;width:1px;height:372px;background:;background:linear-gradient(#9cc8e0,#8ab0cc 100px,#7a7e90 200px,#7a7e90)"></div><div class="b" style="left:6px;top:426px;width:425px;height:1px;background:repeating-linear-gradient(90deg,rgba(225,225,225,0.55) 0 12px,transparent 12px 15px)"></div><div class="b" style="left:428px;top:427px;width:1px;height:144px;background:repeating-linear-gradient(180deg,rgba(225,225,225,0.45) 0 2px,transparent 2px 5px)"></div><div class="b" style="left:432px;top:572px;width:485px;height:1px;background:repeating-linear-gradient(90deg,rgba(225,225,225,0.55) 0 11px,transparent 11px 17px)"></div><div class="b" style="left:1157px;top:441px;width:76px;height:1px;background:repeating-linear-gradient(90deg,rgba(225,225,225,0.55) 0 6px,transparent 6px 9px)"></div><div class="b" style="left:1234px;top:398px;width:261px;height:1px;background:repeating-linear-gradient(90deg,rgba(225,225,225,0.55) 0 10px,transparent 10px 17px)"></div><div class="b" style="left:5px;top:69px;width:1px;height:81px;background:#b4dcef;"></div><div class="b" style="left:5px;top:150px;width:1px;height:276px;background:repeating-linear-gradient(180deg,rgba(210,210,210,0.55) 0 3px,transparent 3px 7px)"></div><div class="b" style="left:12px;top:68px;width:8px;height:1px;background:#e0ddd0;"></div><div class="b" style="left:1437px;top:68px;width:57px;height:1px;background:#e6e2d6;"></div><div class="b" style="left:1493px;top:69px;width:1px;height:83px;background:repeating-linear-gradient(180deg,rgba(230,230,230,0.9) 0 3px,transparent 3px 4px)"></div><div class="b" style="left:1156px;top:443px;width:1px;height:17px;background:rgba(200,200,200,0.5);"></div><svg class="b" style="left:990px;top:482px" width="100" height="146" viewBox="990 482 100 146">
<defs>
<pattern id="pn" width="6" height="6" patternUnits="userSpaceOnUse"><rect width="6" height="6" fill="#202522"/><rect x="0" y="0" width="1" height="1" fill="#343a36"/><rect x="0" y="2" width="1" height="1" fill="#141715"/><rect x="0" y="5" width="1" height="1" fill="#343a36"/><rect x="1" y="0" width="1" height="1" fill="#343a36"/><rect x="1" y="2" width="1" height="1" fill="#141715"/><rect x="1" y="3" width="1" height="1" fill="#343a36"/><rect x="2" y="3" width="1" height="1" fill="#343a36"/><rect x="3" y="3" width="1" height="1" fill="#343a36"/><rect x="4" y="0" width="1" height="1" fill="#141715"/><rect x="4" y="1" width="1" height="1" fill="#343a36"/><rect x="5" y="2" width="1" height="1" fill="#141715"/><rect x="5" y="4" width="1" height="1" fill="#141715"/></pattern>
<linearGradient id="hg" x1="0" y1="0" x2="1" y2="1"><stop offset="0" stop-color="#9a5620"/><stop offset="1" stop-color="#74400f"/></linearGradient>
</defs>
<!-- jacket -->
<polygon points="1008.5,529.7 1010.8,528.2 1059.3,528.2 1064,537.4 1067,548.6 1058,551 1057,570.5 1019.3,570.5 1014.7,549 1003.9,548" fill="#151515"/>
<polygon points="1018,532 1031,532 1031,570 1019,570" fill="#1c1c1c"/>
<polygon points="1045,532 1057,532 1057,570 1045,570" fill="#1c1c1c"/>
<rect x="1018" y="562" width="40" height="1" fill="#202020"/>
<!-- shirt -->
<rect x="1031.4" y="528.2" width="13.6" height="42.3" fill="#1b6aaa"/>
<path d="M1032,538 L1035,536.5 L1038,539 L1041,535 L1043,537 L1045,536 L1045,545 L1044,549 L1042,547 L1041,551 L1039,548 L1037,550 L1035,547 L1032,548 L1033,544 Z" fill="#10243e"/>
<rect x="1031.5" y="526.6" width="13.5" height="2.6" fill="#d4d4d4"/>
<!-- left arm -->
<polygon points="1003.1,548.2 1014.7,549 1016.2,552.8 1013.9,563.6 1010.8,572.1 1006.9,572.8 1005.4,570.5 1001.6,571.3 1000.8,577.5 997.7,579 994.6,574.4 994.2,566.7 997.7,560.5" fill="#d6d6d6"/>
<polygon points="997.7,560.5 1013.9,563.6 1010.8,572.1 1006.9,572.8 1005.4,570.5 1001.6,571.3 1000.8,577.5 997.7,579 994.6,574.4 994.2,566.7" fill="#cacaca"/>
<!-- right arm -->
<polygon points="1057.8,550.5 1067,548.6 1070.1,552.8 1075.5,562.8 1079.8,565.1 1080.1,574.4 1076.3,576.7 1073.2,572.1 1070.9,571.3 1067,572.8 1063.2,568.2 1057.8,557.4" fill="#d6d6d6"/>
<polygon points="1063.2,568.2 1075.5,562.8 1079.8,565.1 1080.1,574.4 1076.3,576.7 1073.2,572.1 1070.9,571.3 1067,572.8" fill="#cbcbcb"/>
<!-- legs -->
<polygon points="1020.4,571 1037.8,571 1034.6,603.5 1015.8,604.5" fill="url(#pn)"/>
<polygon points="1038.6,571 1055.8,571 1061.2,604 1042,604.5" fill="url(#pn)"/>
<rect x="1037.5" y="571" width="1.2" height="34" fill="#111"/>
<polygon points="1015.8,603.5 1034.6,603 1034,609 1016,609" fill="#0a0a0a"/>
<polygon points="1042,603.5 1061.2,603.5 1061,609 1043,609" fill="#0a0a0a"/>
<!-- shoes -->
<polygon points="1015,612.2 1020.4,606.8 1029.6,607.6 1033.5,613.7 1032.7,619.1 1024.3,621.4 1015.8,619.9" fill="#e4e4e4"/>
<polygon points="1015.5,617 1033,616.5 1032.7,619.1 1024.3,621.4 1015.8,619.9" fill="#cfcfcf"/>
<polygon points="1042,604.5 1046.6,607.6 1055,605.3 1060.4,607.6 1062,615.3 1051.2,617.6 1045,613" fill="#e4e4e4"/>
<polygon points="1046,612.5 1062,613 1062,615.3 1051.2,617.6 1045,613" fill="#cfcfcf"/>
<!-- hair back -->
<path d="M1019.9,521 C1017.5,514 1017.5,503 1021,497 C1022.5,492 1025,490.5 1027.5,491 C1030.5,491.5 1032,494 1033.5,496 C1034,491 1036,488.5 1038,488.5 C1040.5,488.5 1042,491 1042.5,494 C1043.5,491.5 1045.5,491 1047,492.5 C1051,496 1054.5,503 1054.8,510 C1055,516 1054,521 1050,525 L1046,518 L1028,518 L1024.2,521 Z" fill="url(#hg)"/>
<path d="M1023,496 Q1021,505 1021,514 M1028,493 Q1030,500 1028.5,504 M1037,490 Q1039,495 1039.5,500 M1047,495 Q1051,503 1052,512 M1031,494 Q1033,499 1032,502" stroke="#5e320c" stroke-width="0.9" fill="none" opacity="0.8"/>
<!-- face -->
<polygon points="1032.8,500.6 1039,500 1040.8,505.6 1045.1,503.7 1048.2,508.7 1048.8,526.5 1024.8,526.5 1024.2,518.5 1026,508.7 1028.5,504.3" fill="#d8d8d8"/>
<rect x="1035" y="503.1" width="2.1" height="3.7" fill="#1a1a1a"/>
<rect x="1034.4" y="517.6" width="8" height="1.3" fill="#1e1e1e"/>
</svg>

</body></html>
